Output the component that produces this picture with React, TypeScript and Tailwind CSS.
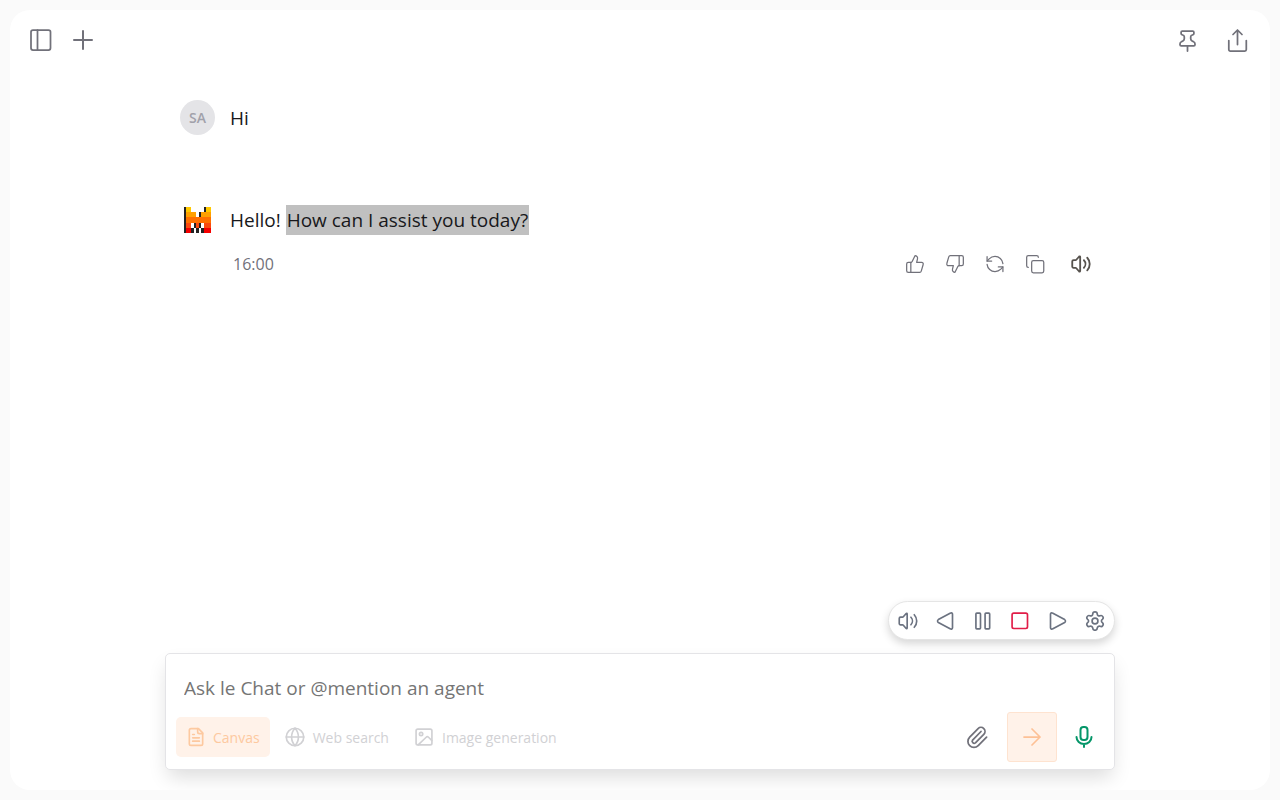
import React, { useState } from 'react';

type IconProps = { size?: number; stroke?: number; className?: string; children: React.ReactNode };

function Icon({ size = 24, stroke = 1.75, className = '', children }: IconProps) {
  return (
    <svg
      width={size}
      height={size}
      viewBox="0 0 24 24"
      fill="none"
      stroke="currentColor"
      strokeWidth={stroke}
      strokeLinecap="round"
      strokeLinejoin="round"
      className={`shrink-0 ${className}`}
      aria-hidden="true"
    >
      {children}
    </svg>
  );
}

const volume = (
  <>
    <path d="M11 3.500a.7.7 0 0 0-1.200-.5L6.400 6.900A1.400 1.400 0 0 1 5.400 7.400H3a1.500 1.500 0 0 0-1.500 1.500v6.200A1.500 1.500 0 0 0 3 16.600h2.400a1.400 1.400 0 0 1 1 .5L9.800 21a.7.7 0 0 0 1.200-.5z" />
    <path d="M15.500 7.500a6.500 6.500 0 0 1 0 9" />
    <path d="M19.500 4.500a11 11 0 0 1 0 15" />
  </>
);

const thumb = (
  <>
    <path d="M7 10v12" />
    <path d="M15 5.900 14 10h5.800a2 2 0 0 1 2 2.600l-2.300 8A2 2 0 0 1 17.500 22H4a2 2 0 0 1-2-2v-8a2 2 0 0 1 2-2h2.800a2 2 0 0 0 1.800-1.100L12 2a3.100 3.100 0 0 1 3 3.900Z" />
  </>
);

// [column, row, width, colour] on an 11 x 10 grid
const logoCells: [number, number, number, string][] = [
  [0, 0, 1, '#222'], [1, 0, 2, '#ffc800'], [8, 0, 1, '#222'], [9, 0, 2, '#ffc800'],
  [0, 2, 1, '#222'], [1, 2, 4, '#ffa000'], [6, 2, 1, '#222'], [7, 2, 4, '#ffa000'],
  [0, 4, 1, '#222'], [1, 4, 10, '#ff7000'],
  [0, 6, 1, '#222'], [1, 6, 2, '#fa4a0f'], [4, 6, 1, '#222'], [5, 6, 1, '#fa4a0f'], [6, 6, 1, '#222'], [8, 6, 3, '#fa4a0f'],
  [0, 8, 1, '#222'], [1, 8, 2, '#f50000'], [3, 8, 1, '#222'], [5, 8, 1, '#222'], [7, 8, 1, '#222'], [8, 8, 3, '#f50000'],
];

function Logo() {
  return (
    <svg width="27" height="26" viewBox="0 0 11 10" preserveAspectRatio="none" shapeRendering="crispEdges" aria-hidden="true">
      {logoCells.map(([x, y, w, fill]) => (
        <rect key={`${x}-${y}`} x={x} y={y} width={w} height={2} fill={fill} />
      ))}
    </svg>
  );
}

function IconButton({ label, className = '', onClick, children }: { label: string; className?: string; onClick?: () => void; children: React.ReactNode }) {
  return (
    <button type="button" aria-label={label} title={label} onClick={onClick} className={`flex items-center justify-center ${className}`}>
      {children}
    </button>
  );
}

export default function App() {
  const [message, setMessage] = useState('');

  return (
    <div className="h-screen bg-[#fafafa] p-2.5 font-['Open_Sans','Noto_Sans',sans-serif]">
      <div className="flex h-full flex-col overflow-hidden rounded-[20px] bg-white">
        <header className="flex h-[60px] shrink-0 items-center justify-between pr-2 pl-4 text-[#71717a]">
          <div className="flex items-center gap-1">
            <IconButton label="Toggle sidebar" className="h-10 w-[30px]">
              <Icon size={24}>
                <rect x="2" y="2" width="19.500" height="20" rx="2" />
                <path d="M8.500 2v20" />
              </Icon>
            </IconButton>
            <IconButton label="New chat" className="h-10 w-[46px]">
              <Icon size={24} stroke={2}>
                <path d="M12 3v18M3 12h18" />
              </Icon>
            </IconButton>
          </div>
          <div className="flex items-center">
            <IconButton label="Pin" className="h-10 w-[50px]">
              <Icon size={24}>
                <path d="M12.500 18v5" />
                <path d="M7.300 3h10.400a1.200 1.200 0 0 1 1.200 1.200v1.300a1.300 1.300 0 0 1-1.200 1.300c-1.300.2-2 .9-2 1.900v2.100c0 1 .5 1.600 1.400 2.100l1.500.9a2.400 2.400 0 0 1 1.400 2.200v.7a1.200 1.200 0 0 1-1.200 1.200H6.200a1.200 1.200 0 0 1-1.200-1.200V16a2.400 2.400 0 0 1 1.400-2.200l1.500-.9c.9-.5 1.400-1.100 1.400-2.100V8.700c0-1-.7-1.700-2-1.900a1.300 1.300 0 0 1-1.200-1.300V4.200A1.200 1.200 0 0 1 7.300 3z" />
              </Icon>
            </IconButton>
            <IconButton label="Share" className="h-10 w-[50px]">
              <Icon size={24}>
                <path d="M12.500 16.500V2M8 6.500 12.500 2 17 6.500" />
                <path d="M3.800 12.500v9A1.500 1.500 0 0 0 5.300 23h14.500a1.500 1.500 0 0 0 1.500-1.500v-9" />
              </Icon>
            </IconButton>
          </div>
        </header>

        <main className="mx-auto w-full max-w-[950px] flex-1 pt-[30px] pr-2 pl-[15px] text-[19px] leading-[30px] text-[#18181b]">
          <div className="flex items-center gap-[15px]">
            <div className="flex size-[35px] items-center justify-center rounded-full bg-[#e4e4e7] text-[14px] font-semibold text-[#a1a1aa]">SA</div>
            <p>Hi</p>
          </div>

          <div className="mt-[70px] flex items-start gap-[15px]">
            <div className="flex h-[30px] w-[35px] items-center justify-center">
              <Logo />
            </div>
            <div className="flex-1">
              <p>
                Hello! <mark className="inline-block bg-[#c0c0c0] px-px text-[#18181b]">How can I assist you today?</mark>
              </p>
              <div className="mt-[9px] flex h-10 items-center justify-between text-[#71717a]">
                <time className="pl-[3px] text-[16px]">16:00</time>
                <div className="flex items-center">
                  <IconButton label="Like" className="size-10"><Icon size={20} stroke={1.5}>{thumb}</Icon></IconButton>
                  <IconButton label="Dislike" className="size-10"><Icon size={20} stroke={1.5} className="rotate-180">{thumb}</Icon></IconButton>
                  <IconButton label="Regenerate" className="size-10">
                    <Icon size={20} stroke={1.5}>
                      <path d="M21.500 11.500A9.500 9.500 0 0 0 12 3a10 10 0 0 0-7 2.800L2.500 8.500" />
                      <path d="M2.500 3v5.500H8" />
                      <path d="M2.500 12.500A9.500 9.500 0 0 0 12 21a10 10 0 0 0 7-2.800l2.500-2.700" />
                      <path d="M16 15.500h5.500V21" />
                    </Icon>
                  </IconButton>
                  <IconButton label="Copy" className="size-10">
                    <Icon size={20} stroke={1.5}>
                      <rect x="8" y="8" width="14.500" height="14.500" rx="2" />
                      <path d="M4 16c-1.100 0-2-.9-2-2V4c0-1.100.9-2 2-2h10c1.100 0 2 .9 2 2" />
                    </Icon>
                  </IconButton>
                  <IconButton label="Read aloud" className="h-10 w-[52px] text-[#57534e]"><Icon size={20} stroke={2.2}>{volume}</Icon></IconButton>
                </div>
              </div>
            </div>
          </div>
        </main>

        <footer className="mx-auto mb-5 w-full max-w-[950px]">
          <div className="mb-[13px] ml-auto flex h-[39px] w-[227px] items-center justify-around rounded-full border border-[#e5e5e5] bg-white text-[#6b7280] shadow-[0_4px_8px_rgba(0,0,0,0.16)]">
            <IconButton label="Speak"><Icon size={20} stroke={2}>{volume}</Icon></IconButton>
            <IconButton label="Previous">
              <Icon size={20} stroke={2}>
                <path d="M21 3.800v16.400a1.500 1.500 0 0 1-2.300 1.300L4 13.700a2 2 0 0 1 0-3.400l14.700-7.800A1.500 1.500 0 0 1 21 3.800z" />
              </Icon>
            </IconButton>
            <IconButton label="Pause">
              <Icon size={20} stroke={2}>
                <rect x="3.500" y="2.500" width="5.500" height="19" rx="1" />
                <rect x="14.500" y="2.500" width="5.500" height="19" rx="1" />
              </Icon>
            </IconButton>
            <IconButton label="Stop" className="text-[#e11d48]">
              <Icon size={20} stroke={2}>
                <rect x="2.500" y="2.500" width="18.500" height="18.500" rx="2" />
              </Icon>
            </IconButton>
            <IconButton label="Next">
              <Icon size={20} stroke={2}>
                <path d="M3 3.800v16.400a1.500 1.500 0 0 0 2.300 1.300L20 13.700a2 2 0 0 0 0-3.400L5.300 2.500A1.500 1.500 0 0 0 3 3.800z" />
              </Icon>
            </IconButton>
            <IconButton label="Settings">
              <Icon size={20} stroke={2}>
                <path d="M9.300 3.700a2.700 2.700 0 0 1 5.400 0 2.400 2.400 0 0 0 3.400 2 2.600 2.600 0 0 1 2.700 4.400 2.300 2.300 0 0 0 0 3.900 2.600 2.600 0 0 1-2.700 4.400 2.400 2.400 0 0 0-3.400 2 2.700 2.700 0 0 1-5.400 0 2.400 2.400 0 0 0-3.400-2 2.600 2.600 0 0 1-2.700-4.400 2.300 2.300 0 0 0 0-3.900 2.600 2.600 0 0 1 2.700-4.400 2.400 2.400 0 0 0 3.400-2" />
                <circle cx="12" cy="12" r="3.500" />
              </Icon>
            </IconButton>
          </div>

          <form
            onSubmit={(e) => e.preventDefault()}
            className="rounded-[5px] border border-[#e4e4e7] bg-white pt-3 pr-[11px] pb-[7px] pl-2.5 shadow-[0_10px_20px_-3px_rgba(0,0,0,0.14)]"
          >
            <input
              type="text"
              aria-label="Message"
              value={message}
              onChange={(e) => setMessage(e.target.value)}
              placeholder="Ask le Chat or @mention an agent"
              className="block h-11 w-full px-2 text-[19px] outline-none placeholder:text-[#757575]"
            />
            <div className="mt-0.5 flex h-[50px] items-center justify-between">
              <div className="flex items-center gap-[5px] text-[14px] text-[#d1d1d4]">
                <button type="button" className="flex h-10 items-center gap-[7px] rounded-[5px] bg-[#fff2e9] px-2.5 text-[#fdc9a0]">
                  <Icon size={20} stroke={2}>
                    <path d="M15 2H6a2 2 0 0 0-2 2v16a2 2 0 0 0 2 2h12a2 2 0 0 0 2-2V7Z" />
                    <path d="M14 2v4a2 2 0 0 0 2 2h4M10 9H8M16 13H8M16 17H8" />
                  </Icon>
                  Canvas
                </button>
                <button type="button" className="flex h-10 items-center gap-2 px-2.5">
                  <Icon size={20} stroke={2}>
                    <circle cx="12" cy="12" r="10.500" />
                    <path d="M12 1.500a15.500 15.500 0 0 0 0 21 15.500 15.500 0 0 0 0-21M1.500 12h21" />
                  </Icon>
                  Web search
                </button>
                <button type="button" className="flex h-10 items-center gap-2 px-2.5">
                  <Icon size={20} stroke={2}>
                    <rect x="2.500" y="2.500" width="19" height="19" rx="2" />
                    <circle cx="8.500" cy="8.500" r="2" />
                    <path d="m5 21.500 9.600-9.200a2 2 0 0 1 2.800 0l4.100 4" />
                  </Icon>
                  Image generation
                </button>
              </div>
              <div className="flex items-center">
                <IconButton label="Attach file" className="h-10 w-[60px] text-[#71717a]">
                  <Icon size={24}>
                    <path d="m16 6.500-8.400 8.600a2 2 0 0 0 2.800 2.800l8.400-8.600a4 4 0 1 0-5.700-5.700l-8.400 8.600a6 6 0 1 0 8.500 8.500l8.400-8.600" />
                  </Icon>
                </IconButton>
                <button type="submit" aria-label="Send" className="flex size-[50px] items-center justify-center rounded-[3px] border border-[#fee3d0] bg-[#fff2e9] text-[#fdc196]">
                  <Icon size={24}>
                    <path d="M4 12h16M12 4l8 8-8 8" />
                  </Icon>
                </button>
                <IconButton label="Dictate" className="h-10 w-[46px] pl-2 text-[#059669]">
                  <Icon size={24} stroke={2}>
                    <path d="M12 19v3M19.500 12a7.500 7 0 0 1-15 0" />
                    <rect x="8.500" y="2" width="7" height="13" rx="3" />
                  </Icon>
                </IconButton>
              </div>
            </div>
          </form>
        </footer>
      </div>
    </div>
  );
}
